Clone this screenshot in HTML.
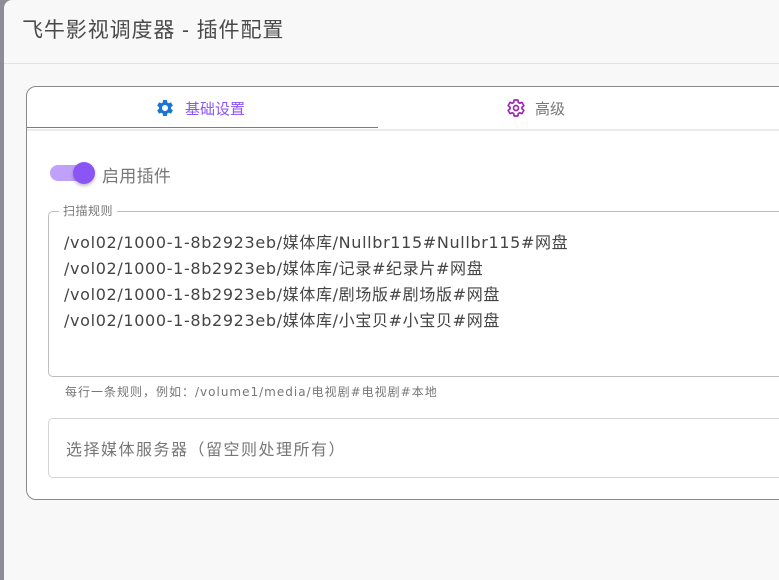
<!DOCTYPE html>
<html><head><meta charset="utf-8"><style>
*{box-sizing:border-box;margin:0;padding:0}
body{width:779px;height:564px;overflow:hidden;background:#8e8c94;font-family:"DejaVu Sans","Noto Sans CJK SC",sans-serif;position:relative}
.dlg{position:absolute;left:4px;top:0;width:790px;height:580px;background:#f8f8f8;border-top-left-radius:8px}
.title{position:absolute;left:18px;top:14px;font-size:21px;color:#4a4a4a;letter-spacing:0.9px;font-family:"Liberation Sans","Noto Sans CJK SC",sans-serif}
.hr{position:absolute;left:0;right:0;top:63px;border-top:1px solid #e2e2e2}
.card{position:absolute;left:22px;top:86px;width:800px;height:414px;background:#fff;border:1px solid #8a8a8a;border-radius:10px}
.tab{position:absolute;top:0;height:42px;display:flex;align-items:center;font-size:15px}
.sep{position:absolute;left:0;right:0;top:42px;border-top:2px solid #ebebeb}
.ul{position:absolute;left:0;width:351px;top:40px;border-top:1.5px solid #8b5cf6}
.tog{position:absolute;left:23px;top:78px;width:42px;height:16px;border-radius:8px;background:#c0a1f9}
.knob{position:absolute;left:46px;top:75px;width:22px;height:22px;border-radius:50%;background:#8b55f6;box-shadow:0 2px 3px rgba(0,0,0,.25)}
.lbl{position:absolute;left:75px;top:75px;font-size:17px;color:#777;letter-spacing:0.3px}
fieldset{position:absolute;left:21px;top:118px;width:800px;height:172px;border:1px solid #bdbdbd;border-radius:5px;padding:0}
legend{margin-left:10px;padding:0 4px;font-size:12px;color:#777;line-height:12px;letter-spacing:0.5px}
.lines{position:absolute;left:37px;top:143px;font-size:16px;line-height:26px;color:#444;letter-spacing:0.65px}
.hint{position:absolute;left:38px;top:296px;font-size:12px;color:#777;letter-spacing:1px}
.sel{position:absolute;left:21px;top:331px;width:800px;height:60px;border:1px solid #d4d4d4;border-radius:5px}
.sel span{position:absolute;left:17px;top:17px;font-size:16px;color:#777;letter-spacing:1.5px}
</style></head><body>
<div class="dlg">
<div class="title">飞牛影视调度器 - 插件配置</div>
<div class="hr"></div>
<div class="card">
 <div class="tab" style="left:128px">
  <svg width="20" height="20" viewBox="0 0 24 24"><path fill="#1976d2" d="M19.14,12.94c0.04-0.3,0.06-0.61,0.06-0.94c0-0.32-0.02-0.64-0.07-0.94l2.03-1.58c0.18-0.14,0.23-0.41,0.12-0.61l-1.92-3.32c-0.12-0.22-0.37-0.29-0.59-0.22l-2.39,0.96c-0.5-0.38-1.03-0.7-1.62-0.94L14.4,2.81c-0.04-0.24-0.24-0.41-0.48-0.41h-3.84c-0.24,0-0.43,0.17-0.47,0.41L9.25,5.35C8.66,5.59,8.12,5.920,7.63,6.29L5.24,5.33c-0.22-0.08-0.47,0-0.59,0.22L2.74,8.87C2.62,9.08,2.66,9.34,2.86,9.48l2.03,1.58C4.84,11.36,4.8,11.69,4.8,12s0.02,0.64,0.07,0.94l-2.03,1.58c-0.18,0.14-0.23,0.41-0.12,0.61l1.92,3.32c0.12,0.22,0.37,0.29,0.59,0.22l2.39-0.96c0.5,0.38,1.03,0.7,1.62,0.94l0.36,2.54c0.05,0.24,0.24,0.41,0.48,0.41h3.84c0.24,0,0.44-0.17,0.47-0.41l0.36-2.54c0.59-0.24,1.13-0.56,1.62-0.94l2.39,0.96c0.22,0.08,0.47,0,0.59-0.22l1.92-3.32c0.12-0.22,0.07-0.47-0.12-0.61L19.14,12.94z M12,15.6c-1.98,0-3.6-1.62-3.6-3.6s1.62-3.6,3.6-3.6s3.6,1.62,3.6,3.6S13.98,15.6,12,15.6z"/></svg>
  <span style="color:#8b55f6;margin-left:10px;font-family:'Liberation Sans','Noto Sans CJK SC',sans-serif">基础设置</span></div>
 <div class="tab" style="left:479px">
  <svg width="20" height="20" viewBox="0 0 24 24"><path fill="none" stroke="#9c27b0" stroke-width="2" d="M19.14,12.94c0.04-0.3,0.06-0.61,0.06-0.94c0-0.32-0.02-0.64-0.07-0.94l2.03-1.58c0.18-0.14,0.23-0.41,0.12-0.61l-1.92-3.32c-0.12-0.22-0.37-0.29-0.59-0.22l-2.39,0.96c-0.5-0.38-1.03-0.7-1.62-0.94L14.4,2.81c-0.04-0.24-0.24-0.41-0.48-0.41h-3.84c-0.24,0-0.43,0.17-0.47,0.41L9.25,5.35C8.66,5.59,8.12,5.92,7.63,6.29L5.24,5.33c-0.22-0.08-0.47,0-0.59,0.22L2.74,8.87C2.62,9.08,2.66,9.34,2.86,9.48l2.03,1.58C4.84,11.36,4.8,11.69,4.8,12s0.02,0.64,0.07,0.94l-2.03,1.58c-0.18,0.14-0.23,0.41-0.12,0.61l1.92,3.32c0.12,0.22,0.37,0.29,0.59,0.22l2.39-0.96c0.5,0.38,1.03,0.7,1.62,0.94l0.36,2.54c0.05,0.24,0.24,0.41,0.48,0.41h3.84c0.24,0,0.44-0.17,0.47-0.41l0.36-2.54c0.59-0.24,1.13-0.56,1.62-0.94l2.39,0.96c0.22,0.08,0.47,0,0.59-0.22l1.92-3.32c0.12-0.22,0.07-0.47-0.12-0.61Z"/><circle cx="12" cy="12" r="3" fill="none" stroke="#9c27b0" stroke-width="2"/></svg>
  <span style="color:#777;margin-left:9px">高级</span></div>
 <div class="sep"></div><div class="ul"></div>
 <div class="tog"></div><div class="knob"></div><div class="lbl">启用插件</div>
 <fieldset><legend>扫描规则</legend></fieldset>
 <div class="lines">/vol02/1000-1-8b2923eb/媒体库/Nullbr115#Nullbr115#网盘<br>/vol02/1000-1-8b2923eb/媒体库/记录#纪录片#网盘<br>/vol02/1000-1-8b2923eb/媒体库/剧场版#剧场版#网盘<br>/vol02/1000-1-8b2923eb/媒体库/小宝贝#小宝贝#网盘</div>
 <div class="hint">每行一条规则，例如：/volume1/media/电视剧#电视剧#本地</div>
 <div class="sel"><span>选择媒体服务器（留空则处理所有）</span></div>
</div>
</div>
</body></html>
